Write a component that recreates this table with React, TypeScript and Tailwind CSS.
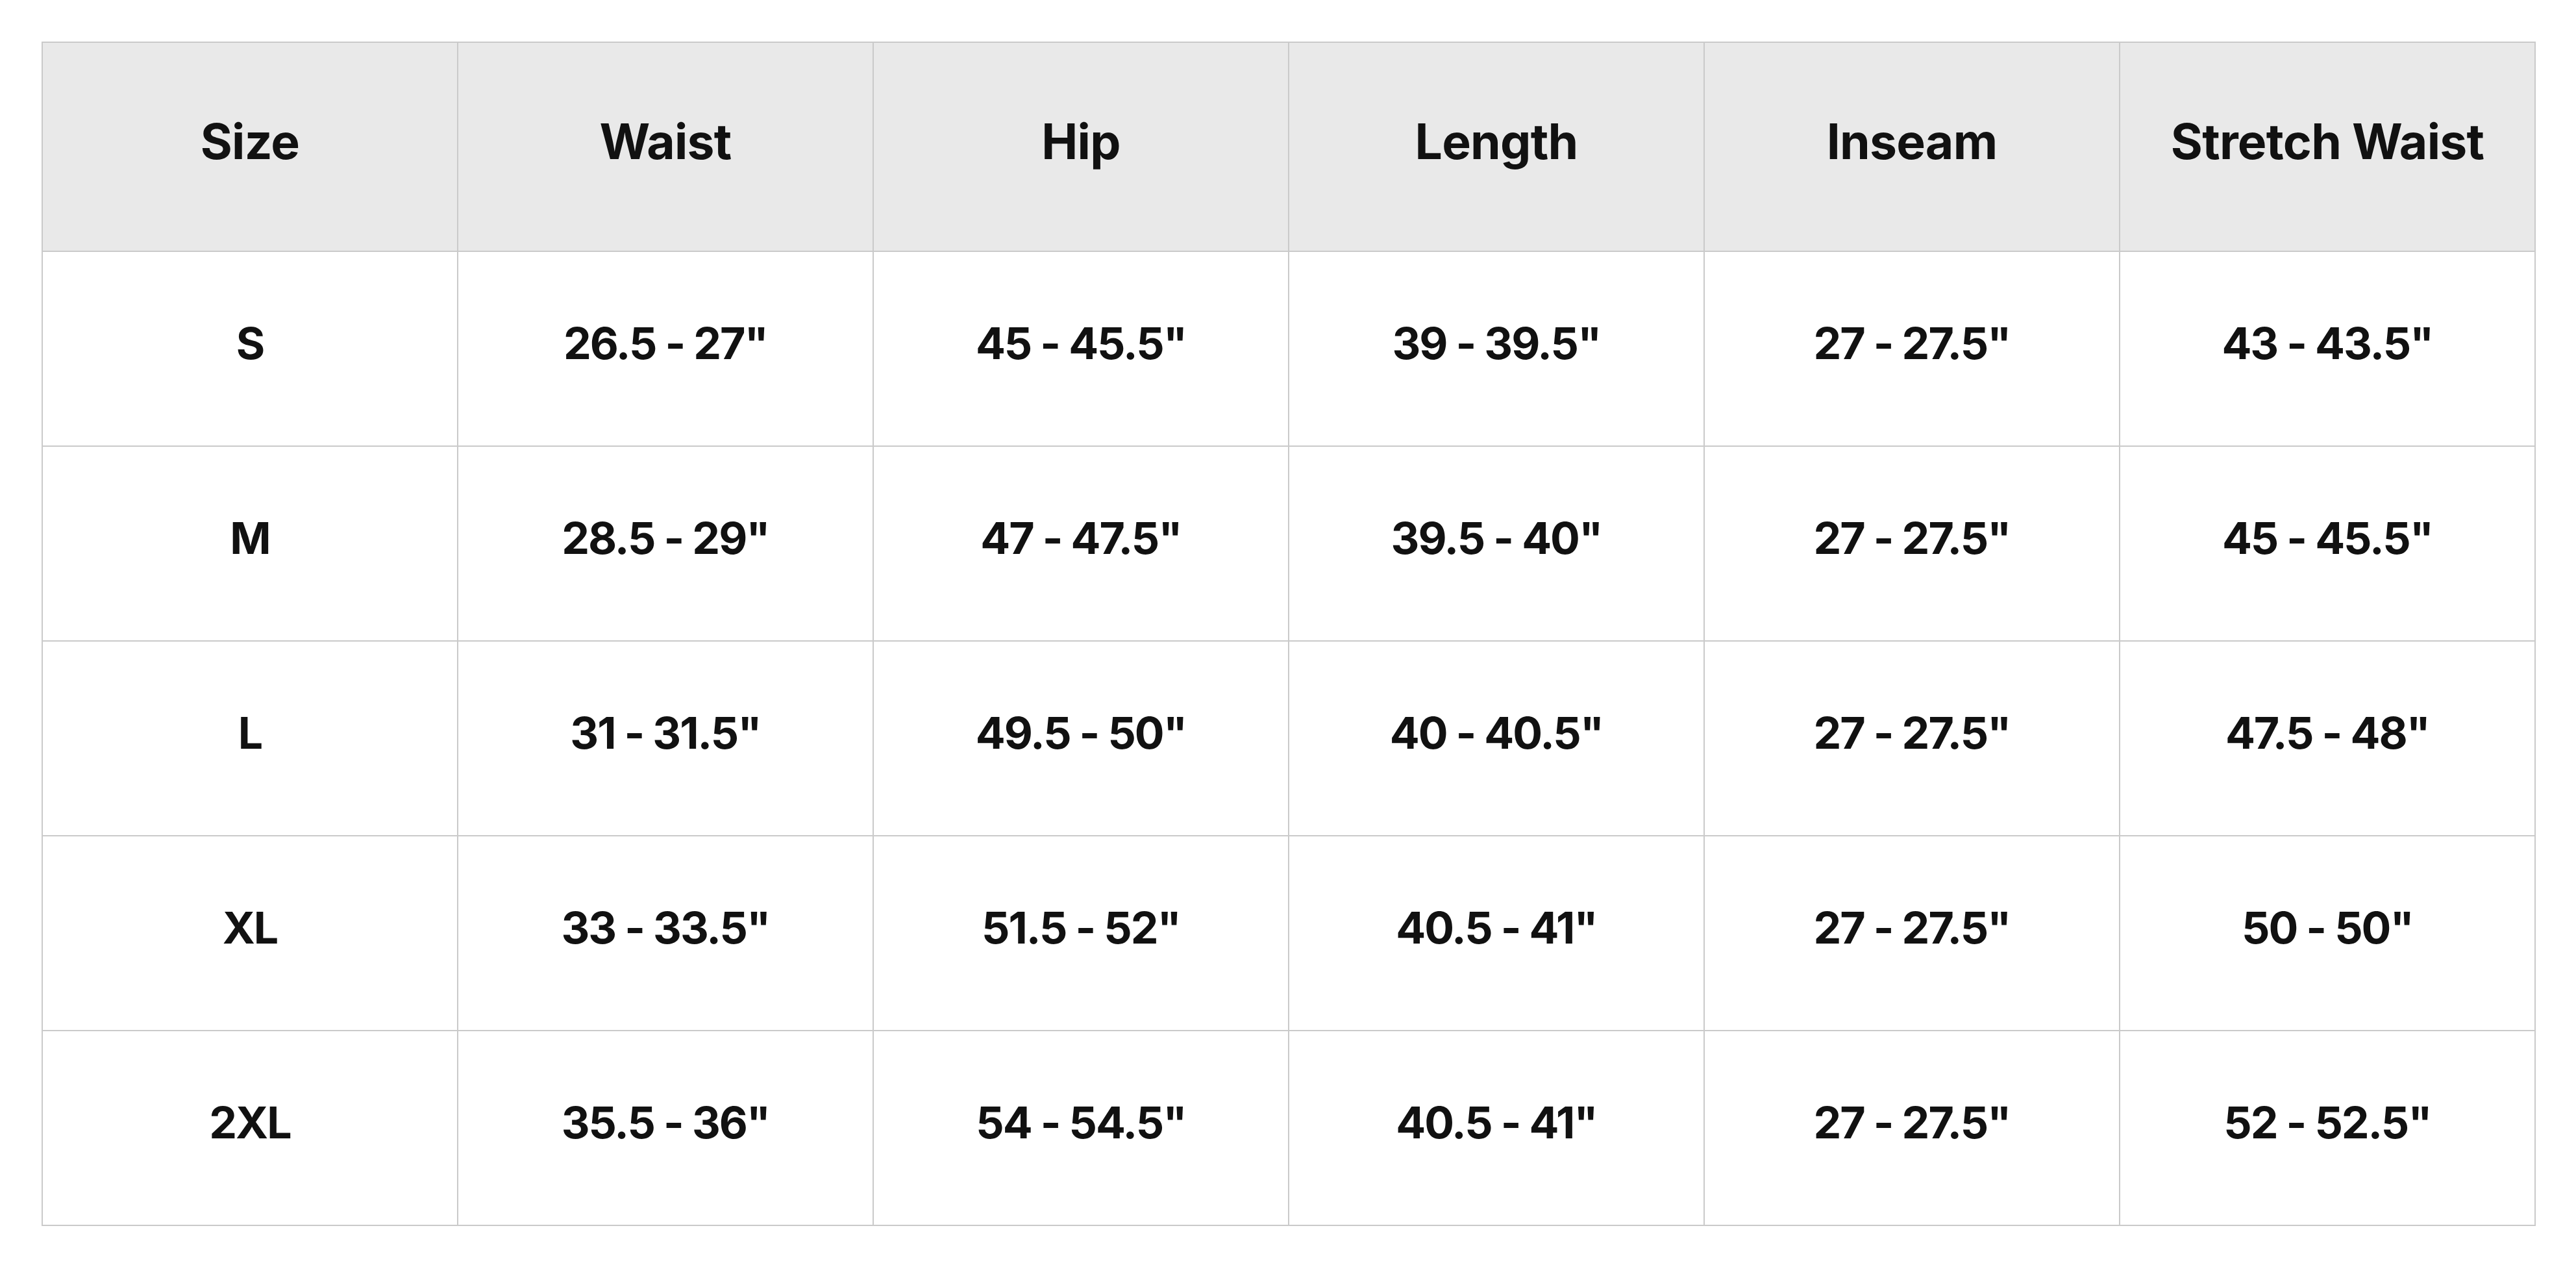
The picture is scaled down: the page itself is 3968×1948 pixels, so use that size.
const headers = ["Size", "Waist", "Hip", "Length", "Inseam", "Stretch Waist"]

const rows = [
  ["S", '26.5 - 27"', '45 - 45.5"', '39 - 39.5"', '27 - 27.5"', '43 - 43.5"'],
  ["M", '28.5 - 29"', '47 - 47.5"', '39.5 - 40"', '27 - 27.5"', '45 - 45.5"'],
  ["L", '31 - 31.5"', '49.5 - 50"', '40 - 40.5"', '27 - 27.5"', '47.5 - 48"'],
  ["XL", '33 - 33.5"', '51.5 - 52"', '40.5 - 41"', '27 - 27.5"', '50 - 50"'],
  ["2XL", '35.5 - 36"', '54 - 54.5"', '40.5 - 41"', '27 - 27.5"', '52 - 52.5"'],
]

export default function App() {
  return (
    <div className="min-h-screen bg-white pl-[64px] pt-[64px] font-['Inter',sans-serif] text-[#111111]">
      {/* Size chart */}
      <table className="w-[3842px] table-fixed border-separate border-spacing-0 border-l-2 border-t-2 border-[#cacaca]">
        <thead>
          <tr className="h-[322px] bg-[#e9e9e9]">
            {headers.map((h) => (
              <th
                key={h}
                className="border-b-2 border-r-2 border-[#cacaca] pb-[16px] text-center align-middle text-[75px] font-bold tracking-[-0.01em]"
              >
                {h}
              </th>
            ))}
          </tr>
        </thead>
        <tbody>
          {rows.map((row) => (
            <tr key={row[0]} className="h-[300px]">
              {row.map((cell, i) => (
                <td
                  key={i}
                  className="border-b-2 border-r-2 border-[#cacaca] pb-[18px] text-center align-middle text-[68px] font-bold tracking-[-0.03em]"
                >
                  {cell}
                </td>
              ))}
            </tr>
          ))}
        </tbody>
      </table>
    </div>
  )
}
